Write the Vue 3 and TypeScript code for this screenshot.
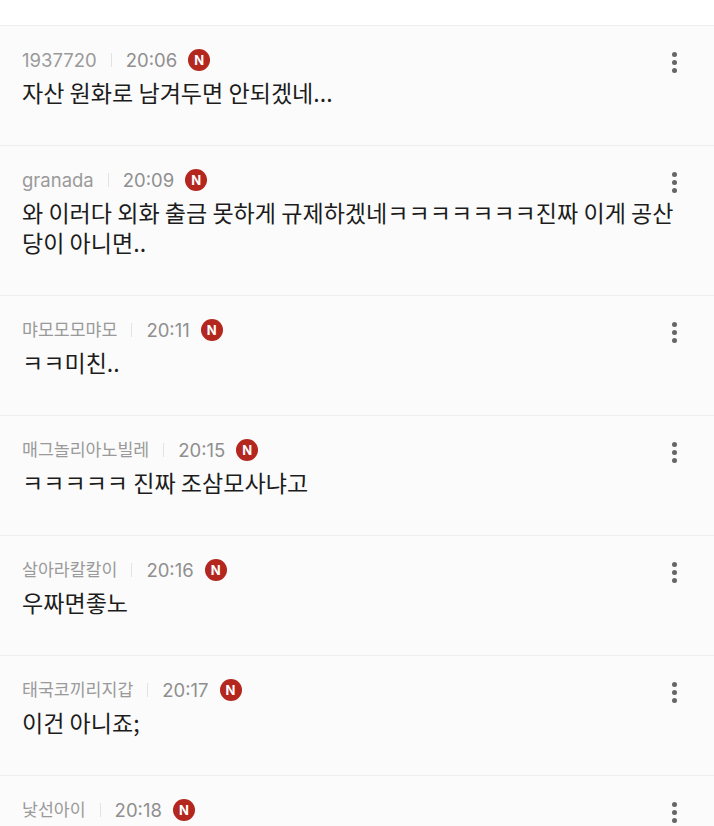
<script setup lang="ts">
interface Comment {
  name: string;
  time: string;
  text: string;
}

const comments: Comment[] = [
  { name: "1937720", time: "20:06", text: "자산 원화로 남겨두면 안되겠네..." },
  { name: "granada", time: "20:09", text: "와 이러다 외화 출금 못하게 규제하겠네ㅋㅋㅋㅋㅋㅋㅋ진짜 이게 공산당이 아니면.." },
  { name: "먀모모모먀모", time: "20:11", text: "ㅋㅋ미친.." },
  { name: "매그놀리아노빌레", time: "20:15", text: "ㅋㅋㅋㅋㅋ 진짜 조삼모사냐고" },
  { name: "살아라칼칼이", time: "20:16", text: "우짜면좋노" },
  { name: "태국코끼리지갑", time: "20:17", text: "이건 아니죠;" },
  { name: "낯선아이", time: "20:18", text: "" },
];

// latin ids run a bit larger than the hangul ones
const isLatin = (name: string) => /^[\x00-\x7f]+$/.test(name);
</script>

<template>
  <div class="page">
    <div class="top"></div>
    <div v-for="c in comments" :key="c.time" class="row">
      <div class="main">
        <div class="meta">
          <span :class="['name', { latin: isLatin(c.name) }]">{{ c.name }}</span>
          <span class="sep"></span>
          <span class="time">{{ c.time }}</span>
          <span class="badge">N</span>
        </div>
        <p class="text">{{ c.text }}</p>
      </div>
      <div class="more" aria-hidden="true"><i></i><i></i><i></i></div>
    </div>
  </div>
</template>

<style>
html, body { background: #fff; overflow: hidden; }
</style>

<style scoped>
.page {
  width: 714px;
  height: 826px;
  overflow: hidden;
  background: #fbfbfb;
  font-family: "Noto Sans CJK KR", "Liberation Sans", sans-serif;
}
.top {
  height: 25px;
  background: #fff;
}
.row {
  display: flex;
  justify-content: space-between;
  padding: 23px 0 36px 22px;
  border-top: 1px solid #eeeeee;
}
.main {
  flex: 0 0 656px;
}
.meta {
  display: flex;
  align-items: center;
  height: 22px;
  font-family: Inter, "Noto Sans CJK KR", sans-serif;
  font-size: 18.5px;
  color: #9a9a9a;
}
.name {
  font-size: 17.3px;
  line-height: 20px;
  margin-top: -1px;
}
.name.latin {
  font-size: 18.5px;
  margin-top: 0;
}
.sep {
  width: 1px;
  height: 14px;
  margin: 0 14px;
  background: #e2e2e2;
}
.time {
  color: #8f8f8f;
}
.badge {
  display: flex;
  align-items: center;
  justify-content: center;
  width: 22px;
  height: 22px;
  margin-left: 11px;
  border-radius: 50%;
  background: #b3271f;
  color: #fff;
  font-size: 13px;
  font-weight: 700;
}
.text {
  margin: 6px 0 0;
  padding-bottom: 2px;
  min-height: 30px;
  font-size: 23.07px;
  line-height: 30px;
  color: #1c1c1c;
}
.more {
  display: flex;
  flex-direction: column;
  gap: 3px;
  width: 36px;
  padding-top: 3px;
}
.more i {
  display: block;
  width: 5px;
  height: 5px;
  margin-left: -6px;
  border-radius: 50%;
  background: #666;
}
</style>
